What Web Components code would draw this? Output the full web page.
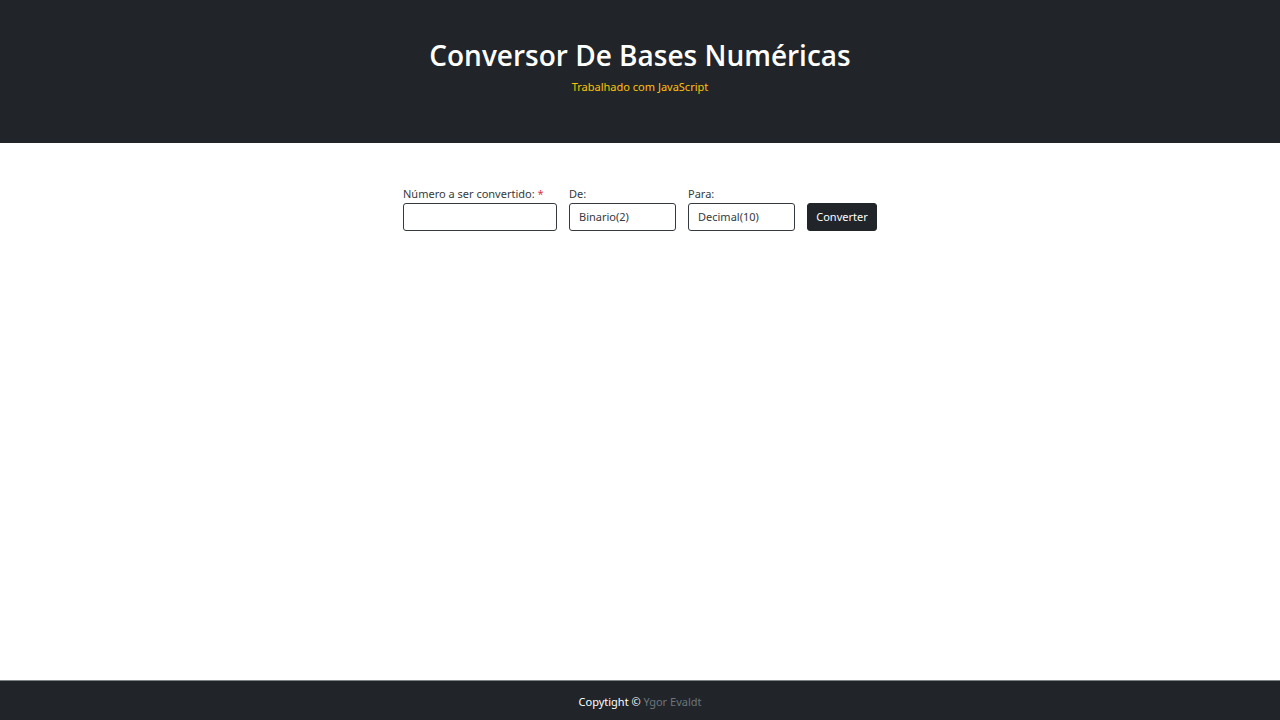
<!DOCTYPE html>
<html lang="pt-BR">
<head>
<meta charset="utf-8">
<meta name="viewport" content="width=device-width, initial-scale=1">
<title>Conversor De Bases Numéricas</title>
<style>
body { margin: 0; font: 11px/18px "Noto Sans", "Open Sans", sans-serif; color: #343a40; background: #fff; }
</style>
</head>
<body>
<converter-page>
  <page-header slot="header">
    <span slot="title">Conversor De Bases Numéricas</span>
    <span slot="subtitle">Trabalhado com JavaScript</span>
  </page-header>
  <base-converter></base-converter>
  <page-footer slot="footer"></page-footer>
</converter-page>
<script>
class ConverterPage extends HTMLElement {
  constructor() {
    super();
    this.attachShadow({ mode: "open" }).innerHTML = `
      <style>
        :host { display: flex; flex-direction: column; min-height: 100vh; }
        main { flex: 1; padding: 42px 16px; }
      </style>
      <slot name="header"></slot>
      <main><slot></slot></main>
      <slot name="footer"></slot>`;
  }
}

class PageHeader extends HTMLElement {
  constructor() {
    super();
    this.attachShadow({ mode: "open" }).innerHTML = `
      <style>
        :host { display: block; background: #212529; }
        header { padding: 37px 16px 47px; text-align: center; }
        h1 { margin: 0 0 5px; font-family: "Open Sans", sans-serif; font-size: 28px; line-height: 36px; font-weight: 600; color: #fff; }
        p { margin: 0; color: #ffc107; }
      </style>
      <header>
        <h1><slot name="title"></slot></h1>
        <p><slot name="subtitle"></slot></p>
      </header>`;
  }
}

class BaseConverter extends HTMLElement {
  constructor() {
    super();
    this.attachShadow({ mode: "open" }).innerHTML = `
      <style>
        :host { display: block; }
        form { display: flex; flex-wrap: wrap; justify-content: center; align-items: flex-end; gap: 12px; }
        .field { display: flex; flex-direction: column; width: 107px; }
        .number { width: 154px; }
        label { white-space: nowrap; }
        .required { color: #dc3545; }
        input, select, button { box-sizing: border-box; height: 28px; margin: 0; padding: 0 9px; border: 1px solid #343a40; border-radius: 3px; font: inherit; color: inherit; }
        input, select { width: 100%; background: #fff; appearance: none; }
        button { border-color: #212529; background: #212529; color: #fff; width: 70px; padding: 0; cursor: pointer; }
      </style>
      <form>
        <div class="field number">
          <label for="number">Número a ser convertido: <span class="required">*</span></label>
          <input id="number" type="text" required>
        </div>
        <div class="field">
          <label for="from">De:</label>
          <select id="from"><option value="2">Binario(2)</option><option value="8">Octal(8)</option><option value="10">Decimal(10)</option><option value="16">Hexadecimal(16)</option></select>
        </div>
        <div class="field">
          <label for="to">Para:</label>
          <select id="to"><option value="2">Binario(2)</option><option value="8">Octal(8)</option><option value="10" selected>Decimal(10)</option><option value="16">Hexadecimal(16)</option></select>
        </div>
        <button type="submit">Converter</button>
      </form>`;
    this.shadowRoot.querySelector("form").addEventListener("submit", event => event.preventDefault());
  }
}

class PageFooter extends HTMLElement {
  constructor() {
    super();
    this.attachShadow({ mode: "open" }).innerHTML = `
      <style>
        :host { display: block; background: #212529; color: #fff; border-top: 1px solid #7c8584; }
        footer { padding: 12px 16px 9px; text-align: center; }
        a { color: #6c757d; text-decoration: none; }
      </style>
      <footer>Copytight © <a href="#">Ygor Evaldt</a></footer>`;
  }
}

customElements.define("converter-page", ConverterPage);
customElements.define("page-header", PageHeader);
customElements.define("base-converter", BaseConverter);
customElements.define("page-footer", PageFooter);
</script>
</body>
</html>
